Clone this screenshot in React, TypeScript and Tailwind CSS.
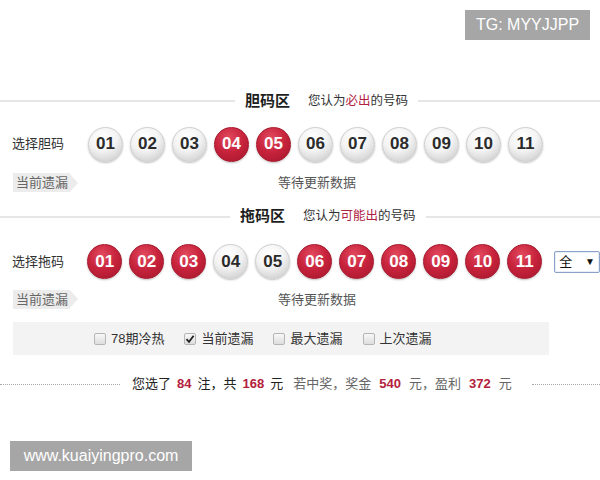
import React from 'react';

const font = "font-['Liberation_Sans','Noto_Sans_CJK_SC',sans-serif]";

const Ball: React.FC<{ n: string; red?: boolean }> = ({ n, red }) => (
  <div
    className={`w-[35px] h-[35px] rounded-full flex items-center justify-center text-[17px] font-bold shadow-[0_1px_2px_rgba(0,0,0,0.25)] ${
      red
        ? 'text-white border border-[#a5172c] bg-[radial-gradient(circle_at_42%_30%,#e24a5e_0%,#c7233c_48%,#a3162b_100%)]'
        : 'text-[#2b2b2b] border border-[#cfcfcf] bg-[radial-gradient(circle_at_42%_28%,#ffffff_0%,#f3f3f3_45%,#c4c4c4_100%)]'
    }`}
  >
    {n}
  </div>
);

const SectionHead: React.FC<{ title: string; pre: string; red: string; left: number }> = ({ title, pre, red, left }) => (
  <div className="flex items-center h-[22px]">
    <div className="h-[2px] bg-[#e6e6e6]" style={{ width: left }} />
    <div className="ml-[10px] text-[15px] font-bold text-[#1e1e1e]">{title}</div>
    <div className="ml-[18px] text-[12.5px] text-[#333]">
      {pre}
      <span className="text-[#b0213f]">{red}</span>的号码
    </div>
    <div className="ml-[10px] flex-1 h-[2px] bg-[#e6e6e6]" />
  </div>
);

const Tag: React.FC = () => (
  <div className="flex items-center h-[19px] ml-[13px]">
    <div className="h-full bg-[#ececec] text-[13px] text-[#666] pl-[3px] pr-[2px] flex items-center">当前遗漏</div>
    <div className="w-0 h-0 border-y-[9.5px] border-y-transparent border-l-[8px] border-l-[#ececec]" />
  </div>
);

const Check: React.FC<{ label: string; checked?: boolean }> = ({ label, checked }) => (
  <div className="flex items-center">
    <div className="w-[12px] h-[12px] border border-[#b5b5b5] rounded-[2px] bg-[linear-gradient(#f8f8f8,#dedede)] flex items-center justify-center">
      {checked && (
        <svg width="10" height="10" viewBox="0 0 10 10">
          <path d="M1.5 5.2 L4 7.8 L8.6 1.8" stroke="#222" strokeWidth="1.8" fill="none" />
        </svg>
      )}
    </div>
    <span className="ml-[5px] text-[13px] text-[#333]">{label}</span>
  </div>
);

const nums = ['01', '02', '03', '04', '05', '06', '07', '08', '09', '10', '11'];
const dan = ['04', '05'];
const tuoWhite = ['04', '05'];

export default function App() {
  return (
    <div className={`w-[600px] h-[480px] bg-white overflow-hidden ${font}`}>
      <div className="flex justify-end pt-[10px] pr-[10px] h-[40px]">
        <div className="w-[125px] h-[30px] bg-[#a6a6a6] text-white text-[16px] flex items-center justify-center">
          TG: MYYJJPP
        </div>
      </div>

      <div className="mt-[50px]">
        <SectionHead title="胆码区" pre="您认为" red="必出" left={235} />
      </div>

      <div className="mt-[12px] flex items-center h-[40px]">
        <div className="w-[88px] pl-[12px] text-[13px] text-[#333]">选择胆码</div>
        <div className="flex gap-[7px]">
          {nums.map(n => (
            <Ball key={n} n={n} red={dan.includes(n)} />
          ))}
        </div>
      </div>

      <div className="mt-[9px] flex items-center">
        <Tag />
        <div className="ml-[200px] text-[13px] text-[#555]">等待更新数据</div>
      </div>

      <div className="mt-[13px]">
        <SectionHead title="拖码区" pre="您认为" red="可能出" left={230} />
      </div>

      <div className="mt-[14px] flex items-center h-[40px]">
        <div className="w-[88px] pl-[12px] text-[13px] text-[#333]">选择拖码</div>
        <div className="flex gap-[7px]">
          {nums.map(n => (
            <Ball key={n} n={n} red={!tuoWhite.includes(n)} />
          ))}
        </div>
        <div className="ml-[12px] w-[46px] h-[22px] border border-[#8aa2c8] rounded-[2px] bg-white flex items-center justify-between px-[4px] text-[13px] text-[#111] shadow-[inset_0_0_0_1px_#e8eef8]">
          <span>全</span>
          <span className="text-[10px]">▼</span>
        </div>
      </div>

      <div className="mt-[8px] flex items-center">
        <Tag />
        <div className="ml-[200px] text-[13px] text-[#555]">等待更新数据</div>
      </div>

      <div className="mt-[13px] ml-[13px] w-[536px] h-[33px] bg-[#f3f3f3] flex items-center pl-[81px] gap-[20px]">
        <Check label="78期冷热" />
        <Check label="当前遗漏" checked />
        <Check label="最大遗漏" />
        <Check label="上次遗漏" />
      </div>

      <div className="mt-[20px] flex items-center h-[18px]">
        <div className="w-[120px] border-t border-dotted border-[#aaa]" />
        <div className="ml-[12px] text-[13px] text-[#333] whitespace-nowrap">
          <span className="text-[#222]">您选了</span>
          <span className="mx-[6px] font-bold text-[#b3213b]">84</span>
          <span className="text-[#222]">注，共</span>
          <span className="mx-[6px] font-bold text-[#b3213b]">168</span>
          <span className="text-[#222]">元</span>
          <span className="ml-[10px] text-[#666]">若中奖，奖金</span>
          <span className="mx-[8px] font-bold text-[#b3213b]">540</span>
          <span className="text-[#666]">元，盈利</span>
          <span className="mx-[8px] font-bold text-[#b3213b]">372</span>
          <span className="text-[#666]">元</span>
        </div>
        <div className="ml-[20px] flex-1 border-t border-dotted border-[#aaa]" />
      </div>

      <div className="mt-[48px] ml-[10px] w-[182px] h-[30px] bg-[#a6a6a6] text-white text-[16px] flex items-center justify-center">
        www.kuaiyingpro.com
      </div>
    </div>
  );
}
